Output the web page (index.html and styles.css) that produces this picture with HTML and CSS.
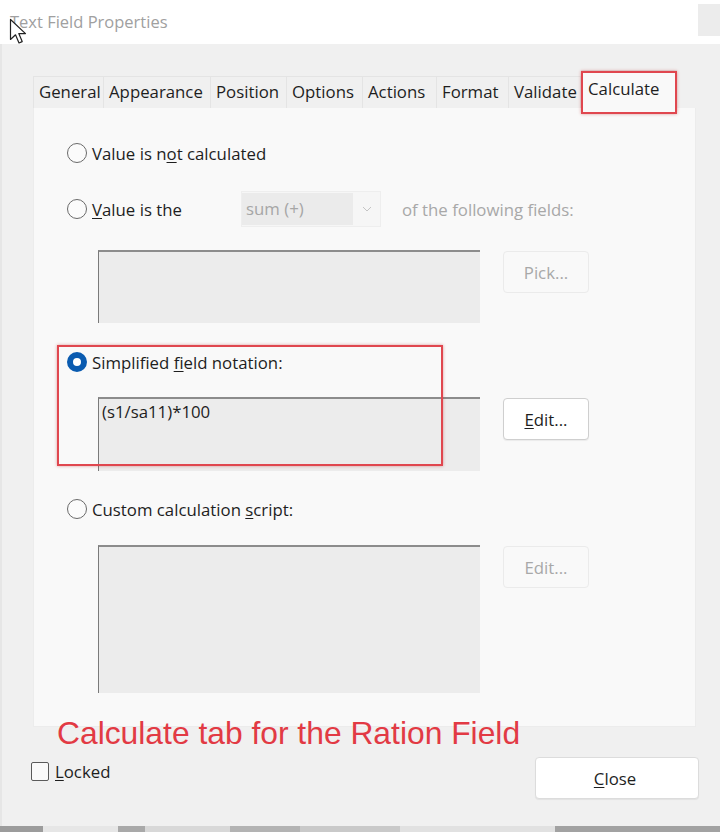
FILE: index.html
```html
<!DOCTYPE html>
<html>
<head>
<meta charset="utf-8">
<link rel="stylesheet" href="styles.css">
</head>
<body>
<div class="window">
  <div class="titlebar">
    <span class="title">Text Field Properties</span>
    <span class="title-btn"></span>
    <svg class="cursor" width="20" height="28" viewBox="0 0 20 28"><path d="M1.5 1.5 L1.5 21.5 L6.5 16.8 L10 25 L13.2 23.6 L9.8 15.6 L16.5 15.6 Z" fill="#fff" stroke="#222" stroke-width="1.2" stroke-linejoin="round"/></svg>
  </div>
  <div class="dialog">
    <div class="tabs">
      <div class="tab w-general">General</div>
      <div class="tab w-appearance">Appearance</div>
      <div class="tab w-position">Position</div>
      <div class="tab w-options">Options</div>
      <div class="tab w-actions">Actions</div>
      <div class="tab w-format">Format</div>
      <div class="tab w-validate">Validate</div>
      <div class="tab tab-active w-calculate">Calculate<span class="mark mark-tab"></span></div>
    </div>
    <div class="panel">
      <div class="row r1">
        <span class="radio"></span><span class="label">Value is n<u>o</u>t calculated</span>
      </div>
      <div class="row r2">
        <span class="radio"></span><span class="label label-fixed"><u>V</u>alue is the</span>
        <span class="select"><span class="select-val">sum (+)</span><span class="chev"><svg width="10" height="6" viewBox="0 0 10 6"><path d="M1 1 L5 5 L9 1" fill="none" stroke="#c4c4c4" stroke-width="1"/></svg></span></span>
        <span class="muted of">of the following fields:</span>
      </div>
      <div class="field-row fr1">
        <div class="textarea ta1"></div>
        <div class="btn btn-disabled">Pick...</div>
      </div>
      <div class="row r3">
        <span class="radio radio-on"></span><span class="label">Simplified <u>f</u>ield notation:</span>
      </div>
      <div class="field-row fr2">
        <div class="textarea ta2">(s1/sa11)*100</div>
        <div class="btn"><span><u>E</u>dit...</span></div>
      </div>
      <div class="row r4">
        <span class="radio"></span><span class="label">Custom calculation <u>s</u>cript:</span>
      </div>
      <div class="field-row fr3">
        <div class="textarea ta3"></div>
        <div class="btn btn-disabled">Edit...</div>
      </div>
      <span class="mark mark-simplified"></span>
    </div>
    <div class="annotation">Calculate tab for the Ration Field</div>
    <div class="footer">
      <label class="check"><span class="box"></span><span><u>L</u>ocked</span></label>
      <div class="btn btn-close"><span><u>C</u>lose</span></div>
    </div>
  </div>
  <div class="taskstrip"></div>
</div>
</body>
</html>
```
FILE: styles.css
```css
* { box-sizing: border-box; }
html, body { margin: 0; padding: 0; }
body {
  width: 720px;
  height: 832px;
  overflow: hidden;
  background: #f0f0f0;
  font-family: "Open Sans", "Noto Sans", sans-serif;
  color: #1e1e1e;
  font-size: 16.8px;
}
u { text-decoration-thickness: 1px; text-underline-offset: 2px; }
.window { display: flex; flex-direction: column; height: 832px; }
.titlebar {
  position: relative;
  height: 44px;
  flex: none;
  background: #fff;
  display: flex;
  align-items: center;
  justify-content: space-between;
  padding-left: 10px;
}
.title { font-size: 16.5px; color: #a0a0a0; margin-top: -1px; }
.title-btn { width: 22px; height: 32px; background: #ececec; margin-top: -4px; }
.cursor { position: absolute; left: 9px; top: 18px; z-index: 2; }

.dialog { flex: 1; background: #f0f0f0; padding-top: 32px; border-left: 2px solid #e6e6e6; }
.tabs { position: relative; z-index: 3; display: flex; height: 32px; padding-left: 31px; }
.tab {
  position: relative;
  height: 32px;
  line-height: 30px;
  padding-left: 5px;
  font-size: 16.8px;
  border: 1px solid #e4e4e4;
  border-bottom: none;
  border-left: none;
  background: #f0f0f0;
  white-space: nowrap;
}
.tab:first-child { border-left: 1px solid #e4e4e4; }
.tab-active { background: #f9f9f9; height: 38px; margin-top: -6px; line-height: 36px; padding-left: 7px; }
.w-general { width: 71px; }
.w-appearance { width: 107px; }
.w-position { width: 76px; }
.w-options { width: 76px; }
.w-actions { width: 74px; }
.w-format { width: 72px; }
.w-validate { width: 72px; }
.w-calculate { width: 96px; }

.mark {
  position: absolute;
  z-index: 5;
  border: 2px solid #e0474f;
  box-shadow: 0 0 3px rgba(190, 40, 40, 0.45);
  pointer-events: none;
}
.mark-tab { left: 0; top: 0; width: 96px; height: 43px; }
.mark-simplified { left: 23px; top: 237px; width: 386px; height: 121px; }

.panel {
  position: relative;
  z-index: 1;
  display: flow-root;
  margin-left: 31px;
  margin-right: 24px;
  height: 619px;
  background: #f9f9f9;
  border: 1px solid #ececec;
  border-top: none;
  padding-left: 33px;
}
.row { display: flex; align-items: center; height: 24px; }
.r1 { margin-top: 33px; }
.r2 { margin-top: 26px; height: 36px; }
.r3 { margin-top: 27px; }
.r4 { margin-top: 26px; }
.radio {
  width: 20px; height: 20px;
  border-radius: 50%;
  border: 1px solid #6a6a6a;
  background: #fbfbfb;
  flex: none;
}
.radio-on {
  border: 6px solid #0a5bb0;
  background: #fff;
}
.label { margin-left: 5px; white-space: nowrap; }
.label-fixed { width: 149px; }
.select {
  display: flex;
  width: 140px; height: 36px;
  border: 1px solid #eeeeee;
  background: #f6f6f6;
}
.select-val {
  width: 111px;
  background: #ebebeb;
  color: #a6a6a6;
  padding-left: 4px;
  line-height: 32px;
  margin: 1px 0;
}
.chev { flex: 1; display: flex; align-items: center; justify-content: center; }
.muted { color: #a8a8a8; }
.of { margin-left: 21px; }

.field-row { display: flex; gap: 23px; padding-left: 31px; }
.fr1 { margin-top: 23px; }
.fr2 { margin-top: 23px; }
.fr3 { margin-top: 24px; }
.textarea {
  width: 382px;
  background: #ececec;
  border-top: 2px solid #8c8c8c;
  border-left: 1px solid #7a7a7a;
  padding: 1px 3px;
}
.ta1 { height: 73px; }
.ta2 { height: 74px; }
.ta3 { height: 148px; }
.btn {
  width: 86px; height: 42px;
  margin-top: 1px;
  background: #fff;
  border: 1px solid #cfcfcf;
  border-radius: 4px;
  box-shadow: 0 1px 1px rgba(0,0,0,0.06);
  display: flex; align-items: center; justify-content: center;
}
.btn-disabled {
  background: #f9f9f9;
  border-color: #ebebeb;
  box-shadow: none;
  color: #a8a8a8;
}

.annotation {
  margin-top: -10px;
  height: 32px;
  line-height: 32px;
  padding-left: 55px;
  font-family: "Liberation Sans", Arial, sans-serif;
  font-size: 31.8px;
  color: #e23a44;
  position: relative;
  z-index: 4;
  white-space: nowrap;
}
.footer {
  display: flex;
  justify-content: space-between;
  align-items: center;
  padding-left: 29px;
  padding-right: 21px;
  margin-top: 8px;
}
.check { display: flex; align-items: center; gap: 6px; margin-bottom: 14px; }
.box { width: 18px; height: 19px; border: 1px solid #5a5a5a; border-radius: 2px; background: #fafafa; }
.btn-close { width: 164px; height: 42px; margin-top: 0; border-color: #dcdcdc; padding-right: 4px; }

.taskstrip {
  height: 6px;
  flex: none;
  background: linear-gradient(to right, #9c9c9c 0 43px, #e6e6e6 43px 118px, #a9a9a9 118px 145px, #d8d8d8 145px 230px, #b3b3b3 230px 300px, #c9c9c9 300px 400px, #e1e1e1 400px 555px, #a2a2a2 555px 720px);
}
```
